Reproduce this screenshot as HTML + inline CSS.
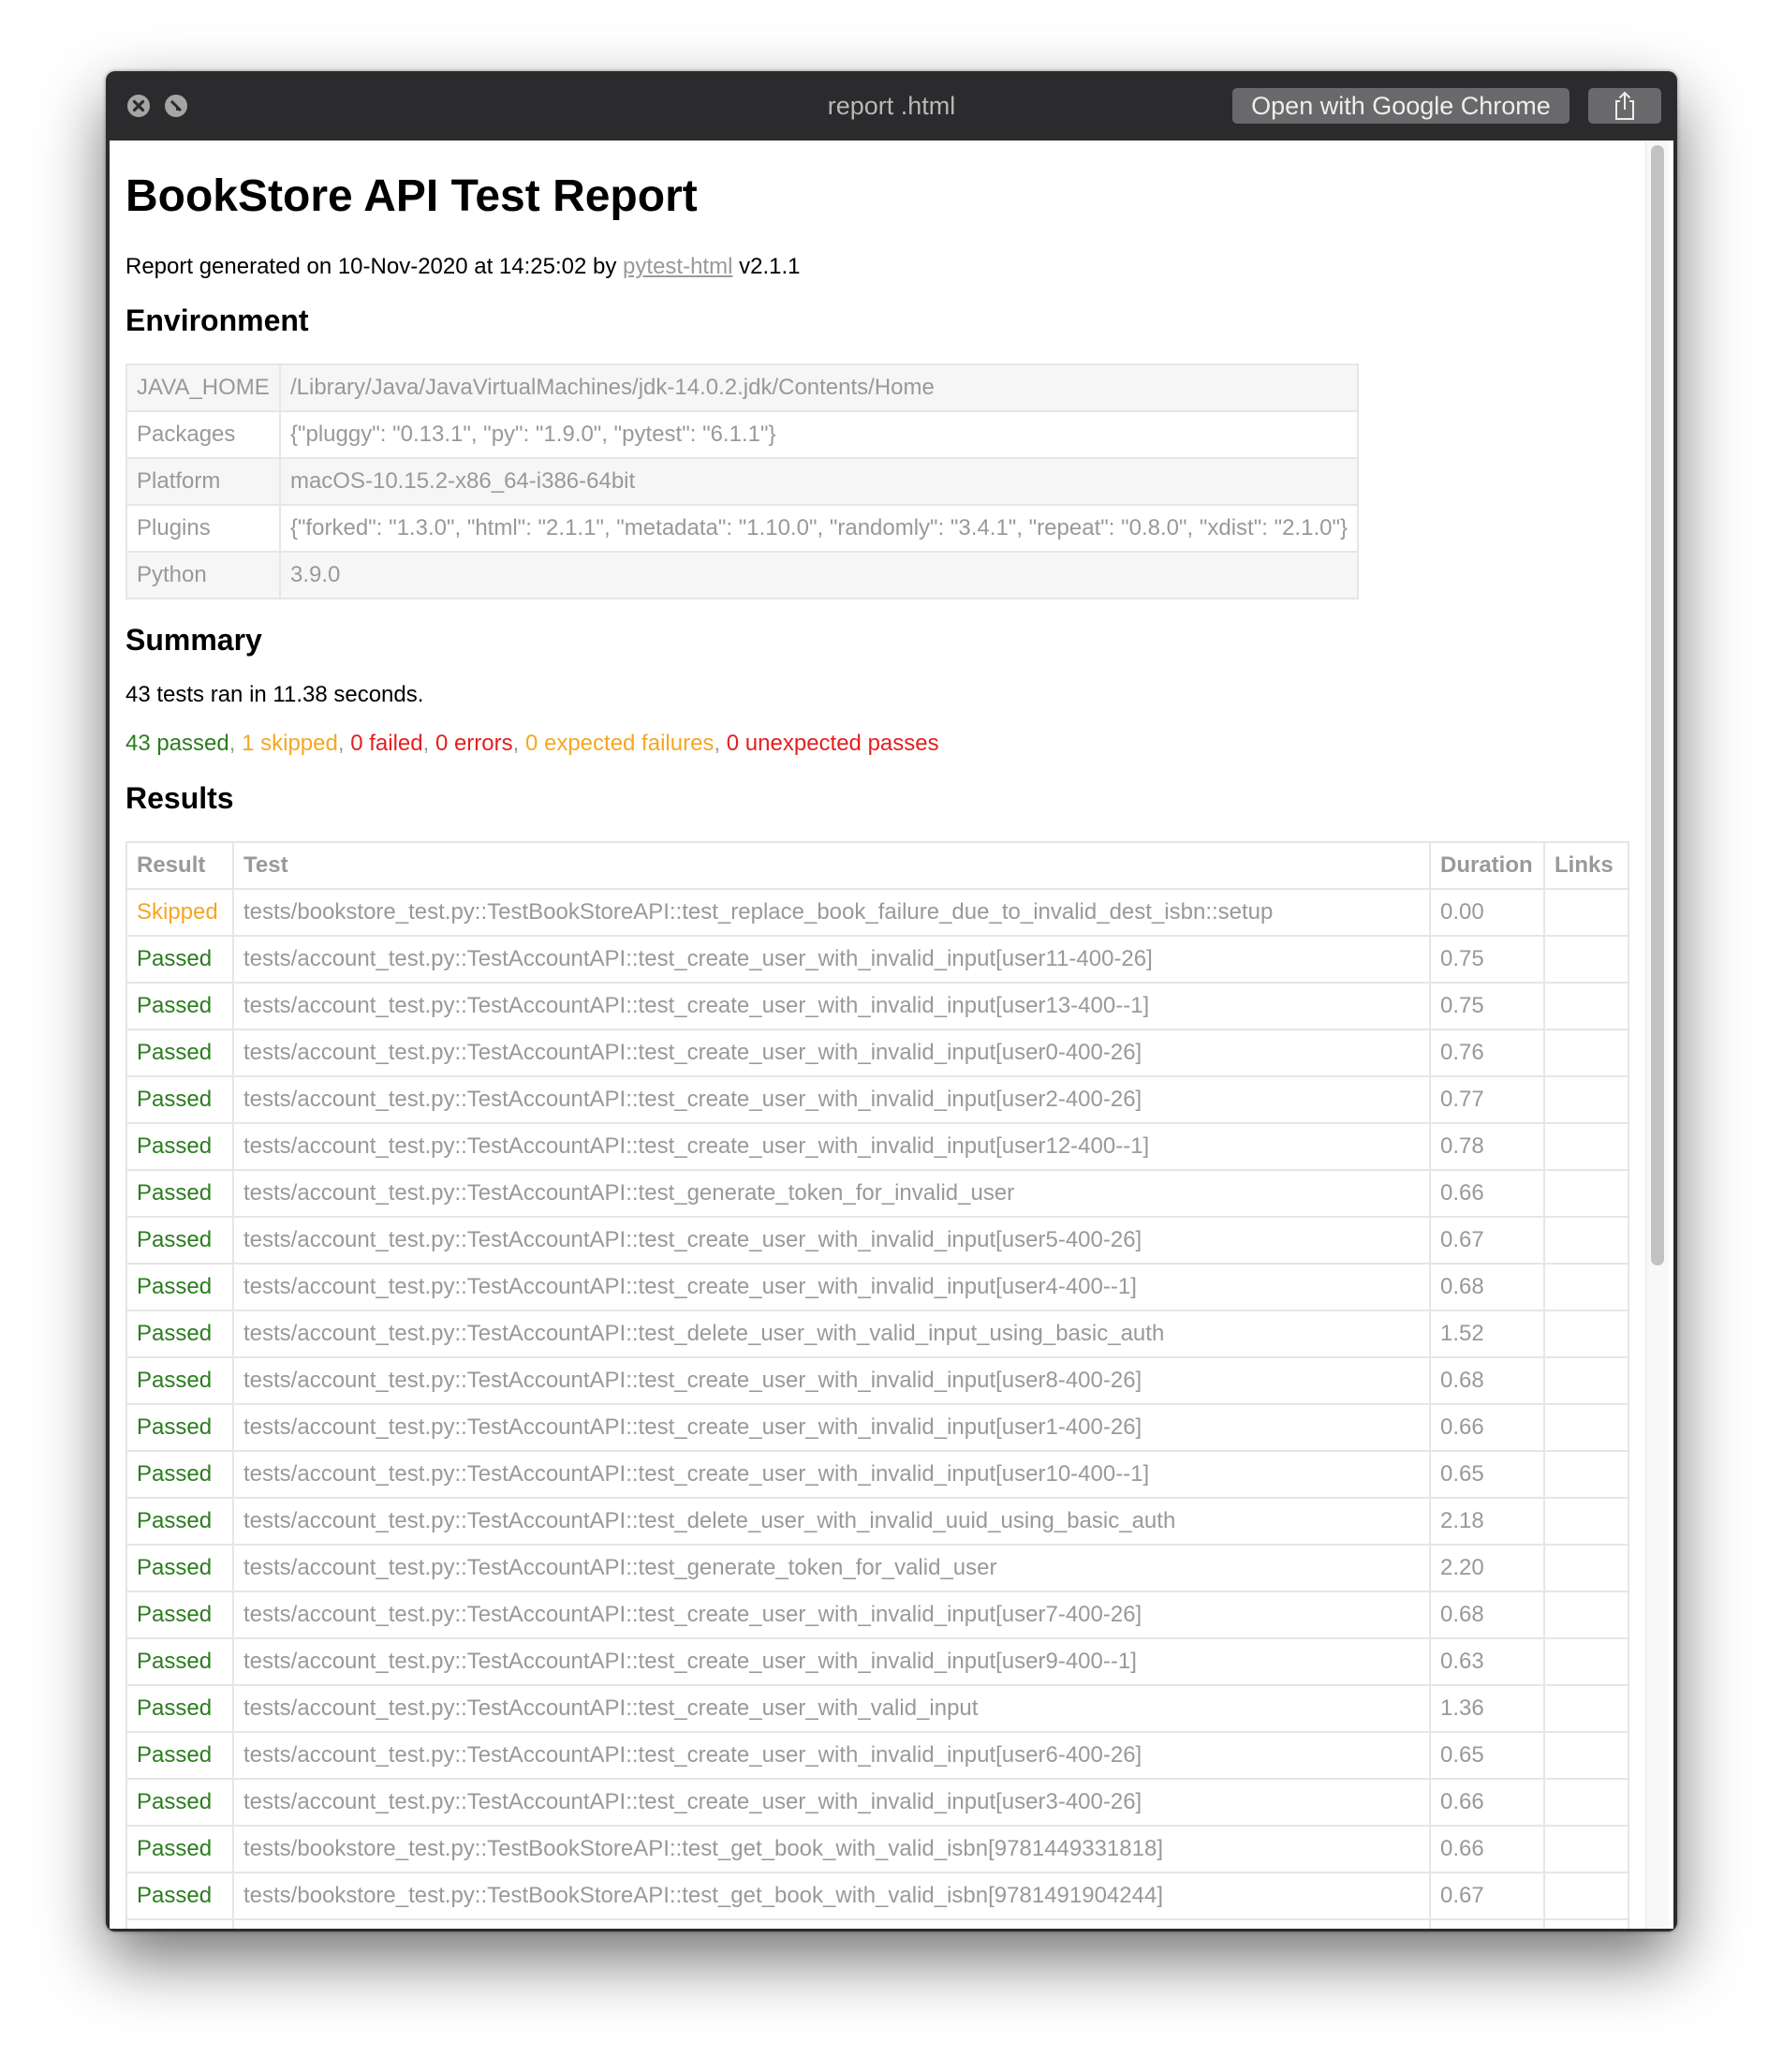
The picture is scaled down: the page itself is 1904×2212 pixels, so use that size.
<!DOCTYPE html>
<html><head><meta charset="utf-8"><style>
html,body{margin:0;padding:0;width:1904px;height:2212px;background:#fff;overflow:hidden;font-family:"Liberation Sans",Arial,sans-serif}
.win{position:absolute;left:113px;top:76px;width:1678px;height:1986px;background:#2b2b2d;border-radius:10px;box-shadow:0 30px 70px rgba(0,0,0,.55),0 0 4px rgba(0,0,0,.4);overflow:hidden}
.title{position:absolute;left:0;right:0;top:21px;text-align:center;color:#b8b8b8;font-size:27px;line-height:32px}
.dot{position:absolute;top:25px;width:24px;height:24px;border-radius:50%;background:#a5a5a5}
.btn{position:absolute;top:18px;height:38px;background:#69696b;border-radius:5px;color:#eee;font-size:27px;line-height:38px;text-align:center}
.content{position:absolute;left:4px;top:74px;width:1670px;height:1909px;background:#fff;overflow:hidden}
.sb{position:absolute;left:1640px;top:0;width:24px;height:1909px;background:#f8f8f8;border-left:1px solid #e8e8e8}
.thumb{position:absolute;left:1646px;top:5px;width:14px;height:1196px;background:#c2c2c2;border-radius:7px}
.a{position:absolute;left:17px;white-space:nowrap}
h1{margin:0;font-size:48px;line-height:48px;font-weight:bold;color:#000}
h2{margin:0;font-size:32px;line-height:40px;font-weight:bold;color:#000}
.p{font-size:24px;line-height:30px;color:#000}
table{border-collapse:collapse;font-size:24px;color:#999}
td,th{border:2px solid #e6e6e6;height:48px;padding:0 10px;text-align:left;white-space:nowrap}
.env td{color:#999}
.env tr:nth-child(odd) td{background:#f6f6f6}
.res th{font-weight:bold;color:#999}
.g{color:#2a7d1d}.o{color:#f5a623}.r{color:#e51e1e}.gr{color:#999}
a{color:#999;text-decoration:underline}
</style></head><body>
<div class="win">
  <div class="dot" style="left:23px"><svg width="24" height="24"><path d="M7.5 7.5L16.5 16.5M16.5 7.5L7.5 16.5" stroke="#2b2b2d" stroke-width="3.2" stroke-linecap="round"/></svg></div>
  <div class="dot" style="left:63px"><svg width="24" height="24"><path d="M7 7L17 17L17 17L7 7Z" stroke="#2b2b2d" stroke-width="3"/><path d="M12 12L17 17L12 17Z" fill="#2b2b2d"/></svg></div>
  <div class="title">report .html</div>
  <div class="btn" style="left:1203px;width:360px">Open with Google Chrome</div>
  <div class="btn" style="left:1583px;width:78px"><svg width="30" height="34" style="margin-top:2px" viewBox="0 0 30 34"><path d="M10 12H6V31H24V12H20M15 3V21M9.5 8.5L15 3L20.5 8.5" fill="none" stroke="#eee" stroke-width="2"/></svg></div>
  <div class="content">
    <div class="sb"></div><div class="thumb"></div>
    <h1 class="a" style="top:36px">BookStore API Test Report</h1>
    <div class="a p" style="top:120px">Report generated on 10-Nov-2020 at 14:25:02 by <a>pytest-html</a> v2.1.1</div>
    <h2 class="a" style="top:172px">Environment</h2>
    <table class="a env" style="top:238px;width:1317px">
      <tr><td style="width:143px">JAVA_HOME</td><td>/Library/Java/JavaVirtualMachines/jdk-14.0.2.jdk/Contents/Home</td></tr>
      <tr><td>Packages</td><td>{"pluggy": "0.13.1", "py": "1.9.0", "pytest": "6.1.1"}</td></tr>
      <tr><td>Platform</td><td>macOS-10.15.2-x86_64-i386-64bit</td></tr>
      <tr><td>Plugins</td><td>{"forked": "1.3.0", "html": "2.1.1", "metadata": "1.10.0", "randomly": "3.4.1", "repeat": "0.8.0", "xdist": "2.1.0"}</td></tr>
      <tr><td>Python</td><td>3.9.0</td></tr>
    </table>
    <h2 class="a" style="top:513px">Summary</h2>
    <div class="a p" style="top:577px">43 tests ran in 11.38 seconds.</div>
    <div class="a p" style="top:629px"><span class="g">43 passed</span><span class="gr">, </span><span class="o">1 skipped</span><span class="gr">, </span><span class="r">0 failed</span><span class="gr">, </span><span class="r">0 errors</span><span class="gr">, </span><span class="o">0 expected failures</span><span class="gr">, </span><span class="r">0 unexpected passes</span></div>
    <h2 class="a" style="top:682px">Results</h2>
    <table class="a res" style="top:748px;width:1606px">
      <tr><th style="width:92px">Result</th><th>Test</th><th style="width:100px">Duration</th><th style="width:68px">Links</th></tr>
      <tr><td class="o">Skipped</td><td>tests/bookstore_test.py::TestBookStoreAPI::test_replace_book_failure_due_to_invalid_dest_isbn::setup</td><td>0.00</td><td></td></tr>
      <tr><td class="g">Passed</td><td>tests/account_test.py::TestAccountAPI::test_create_user_with_invalid_input[user11-400-26]</td><td>0.75</td><td></td></tr>
      <tr><td class="g">Passed</td><td>tests/account_test.py::TestAccountAPI::test_create_user_with_invalid_input[user13-400--1]</td><td>0.75</td><td></td></tr>
      <tr><td class="g">Passed</td><td>tests/account_test.py::TestAccountAPI::test_create_user_with_invalid_input[user0-400-26]</td><td>0.76</td><td></td></tr>
      <tr><td class="g">Passed</td><td>tests/account_test.py::TestAccountAPI::test_create_user_with_invalid_input[user2-400-26]</td><td>0.77</td><td></td></tr>
      <tr><td class="g">Passed</td><td>tests/account_test.py::TestAccountAPI::test_create_user_with_invalid_input[user12-400--1]</td><td>0.78</td><td></td></tr>
      <tr><td class="g">Passed</td><td>tests/account_test.py::TestAccountAPI::test_generate_token_for_invalid_user</td><td>0.66</td><td></td></tr>
      <tr><td class="g">Passed</td><td>tests/account_test.py::TestAccountAPI::test_create_user_with_invalid_input[user5-400-26]</td><td>0.67</td><td></td></tr>
      <tr><td class="g">Passed</td><td>tests/account_test.py::TestAccountAPI::test_create_user_with_invalid_input[user4-400--1]</td><td>0.68</td><td></td></tr>
      <tr><td class="g">Passed</td><td>tests/account_test.py::TestAccountAPI::test_delete_user_with_valid_input_using_basic_auth</td><td>1.52</td><td></td></tr>
      <tr><td class="g">Passed</td><td>tests/account_test.py::TestAccountAPI::test_create_user_with_invalid_input[user8-400-26]</td><td>0.68</td><td></td></tr>
      <tr><td class="g">Passed</td><td>tests/account_test.py::TestAccountAPI::test_create_user_with_invalid_input[user1-400-26]</td><td>0.66</td><td></td></tr>
      <tr><td class="g">Passed</td><td>tests/account_test.py::TestAccountAPI::test_create_user_with_invalid_input[user10-400--1]</td><td>0.65</td><td></td></tr>
      <tr><td class="g">Passed</td><td>tests/account_test.py::TestAccountAPI::test_delete_user_with_invalid_uuid_using_basic_auth</td><td>2.18</td><td></td></tr>
      <tr><td class="g">Passed</td><td>tests/account_test.py::TestAccountAPI::test_generate_token_for_valid_user</td><td>2.20</td><td></td></tr>
      <tr><td class="g">Passed</td><td>tests/account_test.py::TestAccountAPI::test_create_user_with_invalid_input[user7-400-26]</td><td>0.68</td><td></td></tr>
      <tr><td class="g">Passed</td><td>tests/account_test.py::TestAccountAPI::test_create_user_with_invalid_input[user9-400--1]</td><td>0.63</td><td></td></tr>
      <tr><td class="g">Passed</td><td>tests/account_test.py::TestAccountAPI::test_create_user_with_valid_input</td><td>1.36</td><td></td></tr>
      <tr><td class="g">Passed</td><td>tests/account_test.py::TestAccountAPI::test_create_user_with_invalid_input[user6-400-26]</td><td>0.65</td><td></td></tr>
      <tr><td class="g">Passed</td><td>tests/account_test.py::TestAccountAPI::test_create_user_with_invalid_input[user3-400-26]</td><td>0.66</td><td></td></tr>
      <tr><td class="g">Passed</td><td>tests/bookstore_test.py::TestBookStoreAPI::test_get_book_with_valid_isbn[9781449331818]</td><td>0.66</td><td></td></tr>
      <tr><td class="g">Passed</td><td>tests/bookstore_test.py::TestBookStoreAPI::test_get_book_with_valid_isbn[9781491904244]</td><td>0.67</td><td></td></tr>
      <tr><td class="g">Passed</td><td>tests/bookstore_test.py::TestBookStoreAPI::test_get_book_with_valid_isbn[9781593275846]</td><td>0.66</td><td></td></tr>
    </table>
  </div>
</div>
</body></html>
